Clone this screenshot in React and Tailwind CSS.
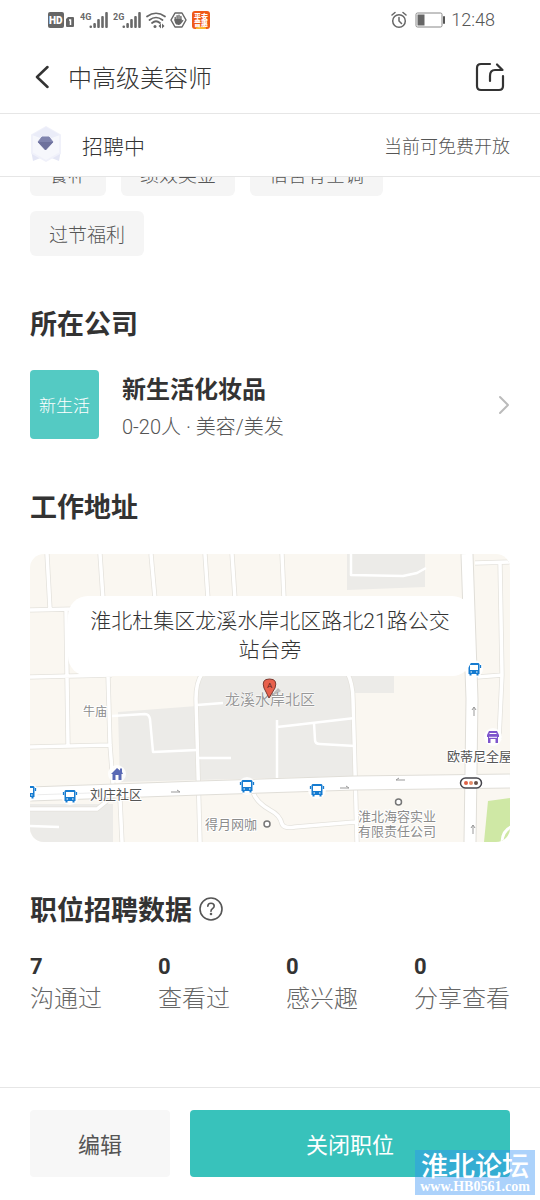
import React from "react";

const tags = ["餐补", "绩效奖金", "宿舍有空调", "过节福利"];
const stats = [
  { value: 7, label: "沟通过" },
  { value: 0, label: "查看过" },
  { value: 0, label: "感兴趣" },
  { value: 0, label: "分享查看" },
];

function Signal({ label }) {
  return (
    <svg viewBox="0 0 28 18" className="h-[18px] w-7" fill="#696969" aria-hidden="true">
      <text x="0" y="9" fontSize="9" fontWeight="700" fontFamily="Roboto, sans-serif">{label}</text>
      <rect x="9.500" y="14.500" width="2.500" height="2.500" rx="1" />
      <rect x="13.300" y="12" width="2.600" height="5" rx="1" />
      <rect x="17.200" y="8" width="2.600" height="9" rx="1" />
      <rect x="21.200" y="5" width="2.600" height="12" rx="1" />
      <rect x="25.200" y="1" width="2.600" height="16" rx="1" />
    </svg>
  );
}

function StatusBar() {
  return (
    <div className="flex h-10 items-center justify-between pl-12 pr-[45px]">
      <div className="flex items-center">
        <svg viewBox="0 0 26 16" className="h-4 w-[26px]" aria-hidden="true">
          <rect width="16" height="16" rx="2" fill="#666" />
          <text x="1" y="12" fontSize="10" fontWeight="900" fontFamily="Roboto, sans-serif" fill="#fff">HD</text>
          <path d="M18 7l2-2h5q1 0 1 1v8q0 1-1 1h-6q-1 0-1-1z" fill="#666" />
          <path d="M21 8h1.500v5" fill="none" stroke="#fff" strokeWidth="1.500" />
        </svg>
        <div className="ml-[6px]"><Signal label="4G" /></div>
        <div className="ml-[5px]"><Signal label="2G" /></div>
        <svg viewBox="0 0 20 17" className="ml-[5px] h-[17px] w-5" fill="none" stroke="#666" strokeWidth="1.700" aria-hidden="true">
          <path d="M1 4.500Q10-2 19 4.500M3.500 8Q10 3 16.500 8M6 11Q10 7.500 14 11" strokeLinecap="round" />
          <circle cx="9" cy="14.500" r="1.500" fill="#666" stroke="none" />
          <path d="M15 11.500v5l-2.500-2.500zM16 11.500v5l2.500-2.500z" fill="#666" stroke="none" />
        </svg>
        <svg viewBox="0 0 17 16" className="ml-1 h-4 w-[17px]" aria-hidden="true">
          <path d="M5 1h7l4 7-4 7H5L1 8z" fill="none" stroke="#666" strokeWidth="1.500" strokeLinejoin="round" />
          <path d="M5.200 8.500V5.500M7.100 8V3.800M9 8V3.300M10.900 8V4.500" stroke="#666" strokeWidth="1.400" strokeLinecap="round" />
          <path d="M4.500 7h7.100v1.500l1.400-.8c.7.300.4 1 0 1.500l-2.200 2.800c-1.500 1.500-4 1.200-5.200-.2-.9-1.200-1.100-2.800-1.100-4.800z" fill="#666" />
        </svg>
        <svg viewBox="0 0 18 18" className="ml-[5px] h-[18px] w-[18px]" aria-hidden="true">
          <rect width="18" height="18" rx="3" fill="#ef5a18" />
          <path d="M4 16.500q5-2 10 0v1.500H4z" fill="#fbb830" />
          <g fontSize="7" fontWeight="900" fontFamily="'Noto Sans CJK SC', sans-serif" fill="#fff">
            <text x="2" y="8">平安</text>
            <text x="2" y="15">普惠</text>
          </g>
        </svg>
      </div>
      <div className="flex items-center">
        <svg viewBox="0 0 16 18" className="h-[18px] w-4" fill="none" stroke="#666" strokeWidth="1.500" strokeLinecap="round" aria-hidden="true">
          <circle cx="8" cy="10" r="6.300" />
          <path d="M8 6.500V10l2.500 2.500M1 4l3-2.500M15 4l-3-2.500" />
        </svg>
        <svg viewBox="0 0 31 16" className="ml-2 h-4 w-[31px]" aria-hidden="true">
          <rect x="1" y="1" width="26" height="14" rx="1.500" fill="none" stroke="#888" />
          <rect x="2.500" y="2.500" width="7" height="11" fill="#666" />
          <rect x="28" y="4" width="2" height="8" rx="1" fill="#555" />
        </svg>
        <span className="ml-[5px] font-[Roboto,sans-serif] text-[18px] font-light leading-5 text-[#555]">12:48</span>
      </div>
    </div>
  );
}

function Bus({ x, y }) {
  return (
    <g transform={`translate(${x} ${y})`}>
      <circle r="9" fill="#fff" opacity="0.85" />
      <path d="M-4.500-6H4.500L5.500-5V5H4.500V6.500H2.500V5H-2.500V6.500H-4.500V5H-5.500V-5z" fill="#157bd0" />
      <path d="M-4-4h8v5h-8z" fill="#fff" />
      <path d="M-3.500 3h1.500M2 3h1.500" stroke="#fff" strokeWidth="1.200" />
      <path d="M-6.500-4v3M6.500-4v3" stroke="#157bd0" strokeWidth="1.300" />
    </g>
  );
}

const minorRoads =
  "M17 0L20 55M70 0L73 45M121 0L125 45M175 0L178 45M202 0L205 45M252 0L254 45M0 56L45 55M36 55L38 191M0 123L82 121M78 121L80 191L83 230M0 193L80 191M90 245L92 288M445 9L480 8M470 9L472 121L469 185M447 123L473 121M172 120Q166 128 166 145L170 288M317 118Q323 130 323 145L327 288M0 255H67L77 247M223 238Q226 248 240 256Q250 261 252 270Q254 275 265 273L325 268";
const innerRoads =
  "M82 162L115 160Q119 160 120 165L123 198L167 196M167 151L193 149M168 204H201M247 166V228M247 173L265 171L325 164M284 169L285 186Q285 190 290 190L325 192M321 0V21L373 22L387 19L396 14M0 272L29 273";

function AreaMap() {
  return (
    <svg viewBox="0 0 480 288" preserveAspectRatio="xMidYMid slice" className="h-72 w-full" role="img" aria-label="工作地址地图">
      <rect width="480" height="288" fill="#faf7f1" />
      <path d="M88 158L167 152V140Q168 121 184 118H364V139H325V222L90 228zM317 0H395V33L317 36zM0 250H83V288H0z" fill="#ecebe8" />
      <path d="M458 247L480 244V288H454z" fill="#cfe8a5" />
      <path d="M472 289Q472 277 481 273" fill="none" stroke="#fff" strokeWidth="3" />
      <path d={minorRoads} fill="none" stroke="#e4e2dc" strokeWidth="5" />
      <path d={minorRoads} fill="none" stroke="#fff" strokeWidth="3.500" />
      <path d={innerRoads} fill="none" stroke="#fff" strokeWidth="2.500" strokeLinejoin="round" />
      <g fill="none" strokeLinejoin="round">
        <path d="M437 0L442 145L440 288" stroke="#e0ded8" strokeWidth="13" />
        <path d="M0 240L170 234L325 229L480 227" stroke="#e0ded8" strokeWidth="15" />
        <path d="M437 0L442 145L440 288" stroke="#fff" strokeWidth="11" />
        <path d="M0 240L170 234L325 229L480 227" stroke="#fff" strokeWidth="13" />
        <path d="M0 241L60 239" stroke="#ececec" />
      </g>
      <g fill="none" stroke="#999" strokeWidth="1">
        <path d="M141 238h9m-3-2l3 2M310 234h9m-3-2l3 2M375 226h-9m3-2l-3 2M444 162v-9m-2 3l2-3 2 3M443 280v-9m-2 3l2-3 2 3" />
      </g>
      <Bus x={-1} y={238} />
      <Bus x={40} y={242} />
      <Bus x={217} y={232} />
      <Bus x={287} y={236} />
      <Bus x={444} y={115} />
      <g transform="translate(87 220)">
        <circle r="9" fill="#fff" opacity="0.85" />
        <path d="M-6 0L0-6 3-3.500V-5.500H5V-2L6 0H4.500V6H1.500V1H-1.500V6H-4.500V0z" fill="#5969b5" />
      </g>
      <g transform="translate(463 183)">
        <circle r="9" fill="#fff" opacity="0.85" />
        <path d="M-4-6H4L6-2V0H5V6H2.500V2H-2.500V6H-5V0H-6V-2z" fill="#7e55cc" />
        <path d="M-3.500-3.500h7M-4 .3h8" stroke="#fff" strokeWidth="1" />
      </g>
      <g transform="translate(441 229)">
        <rect x="-10.500" y="-5" width="21" height="10" rx="5" fill="#fff" stroke="#45454c" strokeWidth="1.500" />
        <circle cx="-5" r="2" fill="#df6146" />
        <circle r="2" fill="#e58d6b" />
        <circle cx="5" r="2" fill="#665048" />
      </g>
      <g fill="#fff" stroke="#777" strokeWidth="1.500">
        <circle cx="368.500" cy="248" r="3" />
        <circle cx="237" cy="270" r="3" />
      </g>
      <g fontFamily="'Noto Sans CJK SC', sans-serif" fontSize="13" fill="#8b8b8b" stroke="#fff" strokeWidth="2" paintOrder="stroke" strokeLinejoin="round">
        <text x="53" y="162" fontSize="12">牛庙</text>
        <text x="60" y="245" fill="#555">刘庄社区</text>
        <text x="175" y="275">得月网咖</text>
        <text x="195" y="151" fontSize="15" fill="#999" strokeWidth="1">龙溪水岸北区</text>
        <text x="417" y="207" fill="#555">欧蒂尼全屋</text>
        <text x="328" y="267">淮北海容实业</text>
        <text x="328" y="282">有限责任公司</text>
      </g>
      <path d="M239 144l9-10 3 3z" fill="#999" opacity="0.6" />
      <path d="M239 144L234 134Q231 125 239.500 125Q248 125 245 134z" fill="#e8604c" stroke="#7b3b32" />
      <text x="239.500" y="134" fontSize="8" textAnchor="middle" fontFamily="Roboto, sans-serif" fill="#5b2320">A</text>
    </svg>
  );
}

export default function App() {
  return (
    <div className="flex min-h-screen flex-col bg-white font-['Noto_Sans_CJK_SC',sans-serif] text-[#333]">
      <StatusBar />
      <header className="flex h-[73px] items-center px-[35px]">
        <button type="button" aria-label="返回">
          <svg viewBox="0 0 14 24" className="h-6 w-[14px]" fill="none" stroke="#333" strokeWidth="2.500" strokeLinecap="round" strokeLinejoin="round">
            <path d="M12.500 2L2 12l10.500 10" />
          </svg>
        </button>
        <h1 className="ml-[19px] flex-1 text-[24px] font-light leading-9">中高级美容师</h1>
        <button type="button" aria-label="分享">
          <svg viewBox="0 0 30 30" className="h-[30px] w-[30px]" fill="none" stroke="#333" strokeWidth="2.200" strokeLinecap="round" strokeLinejoin="round">
            <path d="M15 2H6Q2 2 2 6V24Q2 28 6 28H24Q28 28 28 24V14" />
            <path d="M15 19V14Q15 8 20 8H27.500L22 2.500" />
          </svg>
        </button>
      </header>
      <div className="flex h-16 items-center border-y border-[#e6e6e6] px-[30px]">
        <svg viewBox="0 0 32 38" className="h-[38px] w-8" aria-hidden="true">
          <path d="M1 24L13 31 3 35zM31 24L19 31 29 35z" fill="#e4e6f5" />
          <path d="M16 1L30 9V27L16 35 2 27V9z" fill="#f6f7fc" stroke="#f0f1fa" strokeWidth="2" strokeLinejoin="round" />
          <path d="M16 1L30 9 16 14 2 9z" fill="#eaecf8" />
          <path d="M12 11H19L23 16 15.500 24 8 16z" fill="#7f83ae" stroke="#7f83ae" strokeLinejoin="round" />
          <path d="M8 16H23L15.500 24z" fill="#6e719d" />
        </svg>
        <span className="ml-5 flex-1 text-[21px] font-light leading-8">招聘中</span>
        <span className="text-[18px] font-light leading-7 text-[#555]">当前可免费开放</span>
      </div>
      <main className="flex-1 overflow-hidden px-[30px]">
        <ul className="-mt-[26px] flex flex-wrap gap-[15px] pr-5">
          {tags.map((tag) => (
            <li key={tag} className="h-[45px] rounded-md bg-[#f5f5f5] px-[19px] text-[19px] font-light leading-[45px] text-[#555]">{tag}</li>
          ))}
        </ul>
        <h2 className="mt-[47px] text-[27px] font-bold leading-10">所在公司</h2>
        <a href="#company" className="mt-[27px] flex items-start">
          <span className="flex h-[69px] w-[69px] items-center justify-center rounded bg-[#54cac3] text-[17px] font-light text-white">新生活</span>
          <span className="ml-[23px] flex-1">
            <span className="block text-[24px] font-bold leading-9">新生活化妆品</span>
            <span className="mt-[3px] block font-[Roboto,'Noto_Sans_CJK_SC',sans-serif] text-[20px] font-light leading-9 text-[#555]">0-20人 · 美容/美发</span>
          </span>
          <span className="flex h-[69px] items-center">
            <svg viewBox="0 0 12 20" className="h-5 w-3" fill="none" stroke="#bbb" strokeWidth="2" strokeLinecap="round" strokeLinejoin="round" aria-hidden="true">
              <path d="M2 2l8 8-8 8" />
            </svg>
          </span>
        </a>
        <h2 className="mt-[41px] text-[27px] font-bold leading-10">工作地址</h2>
        <div className="relative mt-7 overflow-hidden rounded-[14px]">
          <AreaMap />
          <p className="absolute inset-x-[38px] top-[42px] rounded-[20px] bg-white px-5 py-[11px] text-center font-[Roboto,'Noto_Sans_CJK_SC',sans-serif] text-[21px] font-light leading-[29px]">淮北杜集区龙溪水岸北区路北21路公交站台旁</p>
        </div>
        <div className="mt-[47px] flex items-center">
          <h2 className="text-[27px] font-bold leading-10">职位招聘数据</h2>
          <button type="button" aria-label="数据说明" className="ml-[7px]">
            <svg viewBox="0 0 24 24" className="h-6 w-6" fill="none" stroke="#555" strokeWidth="1.600" strokeLinecap="round">
              <circle cx="12" cy="12" r="11" />
              <path d="M8.800 9.300Q8.800 6.200 12 6.200T15.200 9Q15.200 10.500 13.500 11.700T12 14.300" />
              <circle cx="12" cy="17" r=".5" />
            </svg>
          </button>
        </div>
        <dl className="mt-[26px] grid grid-cols-[1fr_1fr_1fr_96px]">
          {stats.map((stat) => (
            <div key={stat.label} className="flex flex-col-reverse">
              <dt className="text-[24px] font-light leading-9 text-[#666]">{stat.label}</dt>
              <dd className="font-[Roboto,sans-serif] text-[22px] font-bold leading-6">{stat.value}</dd>
            </div>
          ))}
        </dl>
      </main>
      <footer className="relative flex gap-5 border-t border-[#e6e6e6] px-[30px] pb-[23px] pt-[22px]">
        <button type="button" className="h-[67px] flex-[140] rounded bg-[#f7f7f7] text-[22px] text-[#555]">编辑</button>
        <button type="button" className="h-[67px] flex-[320] rounded bg-[#38c2bb] text-[22px] text-white">关闭职位</button>
        <div className="absolute bottom-[5px] right-[5px] flex h-[45px] w-[120px] flex-col items-center bg-[#2f8ef4]/40 text-white">
          <span className="text-[27px] font-medium leading-[30px]">淮北论坛</span>
          <span className="font-['Liberation_Serif',serif] text-[14px] font-bold leading-[14px]">www.HB0561.com</span>
        </div>
      </footer>
    </div>
  );
}
